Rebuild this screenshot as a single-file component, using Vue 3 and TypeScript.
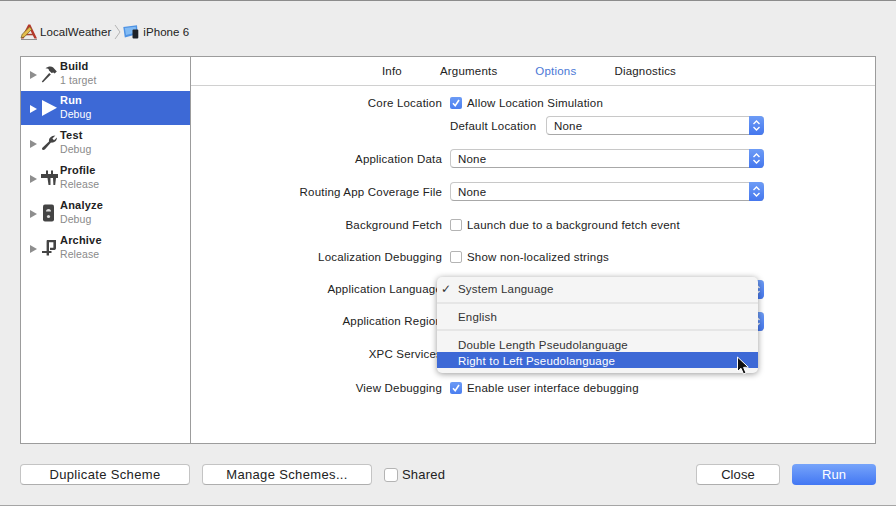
<template>
  <div class="sheet">
    <!-- breadcrumb -->
    <div class="crumbs">
      <svg class="app-icon" width="18" height="18" viewBox="0 0 18 18">
        <path d="M1 15.5 L8.3 1.5 L10.3 1.5 L17 15.5 L14.4 15.5 L9.2 5 L3.6 15.5 Z" fill="#b5382b" />
        <path d="M4.5 10.8 H13.5 V12.3 H4.5 Z" fill="#a8432f" />
        <path d="M1 15 L2.2 11.2 L9.5 4 L11.8 6.2 L4.5 13.8 Z" fill="#e3bd4c" stroke="#6e5a28" stroke-width="0.7" />
        <path d="M1 16.5 H17" stroke="#8f8f8f" stroke-width="1" />
      </svg>
      <span class="crumb-text">LocalWeather</span>
      <svg class="chevron" width="7" height="16" viewBox="0 0 7 16">
        <path d="M1 1 L6 8 L1 15" fill="none" stroke="#b5b5b5" stroke-width="1" />
      </svg>
      <svg class="device-icon" width="16" height="14" viewBox="0 0 16 14">
        <path d="M0.3 2 L14 0.3 L14.6 9 L1.8 12.5 Z" fill="#4f93e4" />
        <path d="M1.8 3 L12.8 1.8 L13.2 7.5 L3 10 Z" fill="#82bbf4" />
        <rect x="9.5" y="4.5" width="5.8" height="9" rx="1" fill="#1e2228" />
      </svg>
      <span class="crumb-text">iPhone 6</span>
    </div>

    <!-- main panel -->
    <div class="panel">
      <aside class="sidebar">
        <div
          v-for="item in actions"
          :key="item.name"
          class="action"
          :class="{ selected: item.name === 'Run', short: item.name === 'Build' || item.name === 'Run' }"
        >
          <span class="disclosure"></span>
          <span class="action-icon">
            <svg width="19" height="22" viewBox="0 0 19 22" v-html="item.icon"></svg>
          </span>
          <div class="action-text">
            <div class="action-name">{{ item.name }}</div>
            <div class="action-sub">{{ item.sub }}</div>
          </div>
        </div>
      </aside>

      <section class="content">
        <nav class="tabs">
          <span v-for="tab in tabs" :key="tab" class="tab" :class="{ active: tab === 'Options' }">{{ tab }}</span>
        </nav>

        <div class="form">
          <div class="group">
            <div class="row">
              <label class="label">Core Location</label>
              <span class="check on"><svg width="12" height="12" viewBox="0 0 12 12"><path d="M3 6.3 L5.2 8.8 L9 3" fill="none" stroke="#fff" stroke-width="1.6" /></svg></span>
              <span class="check-text">Allow Location Simulation</span>
            </div>
            <div class="row">
              <label class="label"></label>
              <span class="inline-label">Default Location</span>
              <div class="select short">
                <span class="select-value">None</span>
                <span class="stepper"><svg width="9" height="13" viewBox="0 0 9 13"><path d="M1.5 5 L4.5 2 L7.5 5 M1.5 8 L4.5 11 L7.5 8" fill="none" stroke="#fff" stroke-width="1.4" /></svg></span>
              </div>
            </div>
          </div>

          <div class="row">
            <label class="label">Application Data</label>
            <div class="select">
              <span class="select-value">None</span>
              <span class="stepper"><svg width="9" height="13" viewBox="0 0 9 13"><path d="M1.5 5 L4.5 2 L7.5 5 M1.5 8 L4.5 11 L7.5 8" fill="none" stroke="#fff" stroke-width="1.4" /></svg></span>
            </div>
          </div>
          <div class="row">
            <label class="label">Routing App Coverage File</label>
            <div class="select">
              <span class="select-value">None</span>
              <span class="stepper"><svg width="9" height="13" viewBox="0 0 9 13"><path d="M1.5 5 L4.5 2 L7.5 5 M1.5 8 L4.5 11 L7.5 8" fill="none" stroke="#fff" stroke-width="1.4" /></svg></span>
            </div>
          </div>
          <div class="row">
            <label class="label">Background Fetch</label>
            <span class="check"></span>
            <span class="check-text">Launch due to a background fetch event</span>
          </div>
          <div class="row tight">
            <label class="label">Localization Debugging</label>
            <span class="check"></span>
            <span class="check-text">Show non-localized strings</span>
          </div>
          <div class="row tight">
            <label class="label">Application Language</label>
            <div class="select">
              <span class="stepper"><svg width="9" height="13" viewBox="0 0 9 13"><path d="M1.5 5 L4.5 2 L7.5 5 M1.5 8 L4.5 11 L7.5 8" fill="none" stroke="#fff" stroke-width="1.4" /></svg></span>
            </div>
          </div>
          <div class="row tight">
            <label class="label">Application Region</label>
            <div class="select">
              <span class="stepper"><svg width="9" height="13" viewBox="0 0 9 13"><path d="M1.5 5 L4.5 2 L7.5 5 M1.5 8 L4.5 11 L7.5 8" fill="none" stroke="#fff" stroke-width="1.4" /></svg></span>
            </div>
          </div>
          <div class="row">
            <label class="label">XPC Services</label>
          </div>
          <div class="row last">
            <label class="label">View Debugging</label>
            <span class="check on"><svg width="12" height="12" viewBox="0 0 12 12"><path d="M3 6.3 L5.2 8.8 L9 3" fill="none" stroke="#fff" stroke-width="1.6" /></svg></span>
            <span class="check-text">Enable user interface debugging</span>
          </div>
        </div>

        <!-- language popup -->
        <div class="popup">
          <div class="popup-item first"><span class="tick">✓</span>System Language</div>
          <div class="popup-sep"></div>
          <div class="popup-item plain">English</div>
          <div class="popup-sep"></div>
          <div class="popup-item double">Double Length Pseudolanguage</div>
          <div class="popup-item hover">Right to Left Pseudolanguage</div>
        </div>
        <svg class="cursor" width="14" height="20" viewBox="0 0 14 20">
          <path d="M1.5 1 L1.5 15.5 L5 12.3 L7.5 18 L10 17 L7.6 11.4 L12.3 11.2 Z" fill="#111" stroke="#fff" stroke-width="1" />
        </svg>
      </section>
    </div>

    <!-- footer buttons -->
    <footer class="footer">
      <button class="btn wide">Duplicate Scheme</button>
      <button class="btn wide">Manage Schemes...</button>
      <span class="check shared-box"></span>
      <span class="shared-text">Shared</span>
      <span class="spacer"></span>
      <button class="btn narrow">Close</button>
      <button class="btn narrow primary">Run</button>
    </footer>
  </div>
</template>

<script setup lang="ts">
interface SchemeAction {
  name: string
  sub: string
  icon: string
}

const tabs: string[] = ['Info', 'Arguments', 'Options', 'Diagnostics']

const actions: SchemeAction[] = [
  {
    name: 'Build',
    sub: '1 target',
    icon: '<path d="M1.8 19.6 L0.8 18.4 L8.2 10 L9.8 11.5 Z" fill="#444"/><path d="M4.5 5.2 C7.5 3.2 10.5 3.2 12.2 4.6 L15.8 8.4 L13.6 10.6 L12.4 9.4 L10.6 10 L8 7.4 C8 6 6.8 5.3 4.5 5.2 Z" fill="#444"/>'
  },
  {
    name: 'Run',
    sub: 'Debug',
    icon: '<path d="M1 3 L16 10.8 L1 19 Z" fill="#fff"/>'
  },
  {
    name: 'Test',
    sub: 'Debug',
    icon: '<path d="M2.4 18 C1 18 .6 16.6 1.4 15.8 L8 9.6 C7.6 6.6 9.8 3.8 14.4 3.6 L11.4 6.4 L13 8.2 L16 5.6 C16 8.8 13.2 11 10 10.6 L4 17.2 C3.6 17.7 3 18 2.4 18 Z" fill="#444"/>'
  },
  {
    name: 'Profile',
    sub: 'Release',
    icon: '<path d="M0 7 H17 V11 H0 Z" fill="#444"/><path d="M5 3.5 H7 V7 H5 Z M10 3.5 H12 V7 H10 Z" fill="#444"/><path d="M6.5 11 H9.5 V18 H7.5 Z M12 11 H15 L14.2 18 H12.4 Z" fill="#444"/>'
  },
  {
    name: 'Analyze',
    sub: 'Debug',
    icon: '<rect x="2" y="2.5" width="11" height="17" rx="2" fill="#444"/><path d="M5 9.5 A2.5 2.5 0 0 1 10 9.5 Z" fill="#ddd"/><circle cx="7.5" cy="14.5" r="1.6" fill="#ddd"/>'
  },
  {
    name: 'Archive',
    sub: 'Release',
    icon: '<path d="M6 3 H15 V11 C15 12.5 14 13 13 13 H9 V10.8 H12.4 V5.2 H8 V14 H10.5 V16 H8 V18.5 H5.6 V16 H1 V14 H5.6 V5 C5.6 4 5.6 3.4 6 3 Z" fill="#444"/>'
  }
]
</script>

<style>
html,
body {
  margin: 0;
  background: #ededed;
}
</style>

<style scoped>
.sheet {
  width: 896px;
  height: 506px;
  box-sizing: border-box;
  overflow: hidden;
  background: #ededed;
  border-top: 1px solid #8c8c8c;
  border-bottom: 1px solid #a5a5a5;
  padding: 0 20px;
  font-family: "Liberation Sans", Arial, sans-serif;
  font-size: 11.5px;
  letter-spacing: 0.2px;
  color: #222;
}

.crumbs {
  height: 55px;
  padding-top: 7px;
  box-sizing: border-box;
  display: flex;
  align-items: center;
}

.crumb-text {
  letter-spacing: 0.05px;
}

.app-icon {
  margin-right: 2px;
}

.chevron {
  margin: 0 2px 0 3px;
}

.device-icon {
  margin-right: 4px;
}

.panel {
  display: flex;
  height: 388px;
  box-sizing: border-box;
  border: 1px solid #9c9c9c;
  background: #fff;
}

.sidebar {
  width: 169px;
  flex-shrink: 0;
  border-right: 1px solid #9c9c9c;
}

.action {
  height: 35px;
  display: flex;
  align-items: center;
  padding-left: 9px;
  box-sizing: border-box;
}

.action.short {
  height: 34px;
}

.action.selected {
  background: #3d69d6;
  color: #fff;
}

.disclosure {
  width: 0;
  height: 0;
  border-left: 7px solid #8e8e8e;
  border-top: 4.5px solid transparent;
  border-bottom: 4.5px solid transparent;
  margin-top: 2px;
}

.selected .disclosure {
  border-left-color: #fff;
}

.action-icon {
  width: 19px;
  height: 22px;
  margin-left: 4px;
}

.action-text {
  margin-top: -2px;
}

.action-name {
  font-weight: bold;
  font-size: 11px;
  line-height: 14px;
  color: #222;
}

.action-sub {
  font-size: 10.5px;
  line-height: 14px;
  color: #8a8a8a;
  letter-spacing: 0.1px;
}

.selected .action-name,
.selected .action-sub {
  color: #fff;
}

.content {
  flex: 1;
  position: relative;
}

.tabs {
  height: 29px;
  box-sizing: border-box;
  border-bottom: 1px solid #d0d0d0;
  display: flex;
  justify-content: center;
  align-items: center;
  gap: 38px;
  padding-right: 8px;
}

.tab.active {
  color: #4a78d6;
}

.form {
  padding-top: 5px;
  display: flex;
  flex-direction: column;
  gap: 10px;
}

.row {
  height: 23px;
  display: flex;
  align-items: center;
}

.row.tight {
  height: 22px;
}

.row.last {
  margin-top: 1px;
}

.label {
  width: 251px;
  text-align: right;
  margin-right: 8px;
  flex-shrink: 0;
  white-space: nowrap;
}

.check {
  width: 12px;
  height: 12px;
  border-radius: 2px;
  box-sizing: border-box;
  border: 1px solid #b4b4b4;
  background: #fff;
  margin-right: 5px;
  flex-shrink: 0;
  display: block;
}

.check.on {
  border: none;
  background: linear-gradient(#6c9bf5, #4a7ef0);
}

.inline-label {
  width: 96px;
}

.select {
  width: 314px;
  height: 19px;
  box-sizing: border-box;
  background: #fff;
  border: 1px solid #c8c8c8;
  border-bottom-color: #a8a8a8;
  border-radius: 4px;
  display: flex;
  align-items: center;
  position: relative;
  padding-left: 7px;
}

.select.short {
  width: 218px;
}

.stepper {
  position: absolute;
  right: -1px;
  top: -1px;
  bottom: -1px;
  width: 15px;
  border-radius: 0 4px 4px 0;
  background: linear-gradient(#6d9cf6, #4577ee);
  display: flex;
  align-items: center;
  justify-content: center;
}

.popup {
  position: absolute;
  left: 246px;
  top: 220px;
  width: 321px;
  height: 96px;
  box-sizing: border-box;
  background: #f5f5f5;
  border-radius: 5px;
  box-shadow: 0 1px 6px rgba(0, 0, 0, 0.4);
  padding-top: 3px;
  color: #333;
}

.popup-item {
  height: 16px;
  line-height: 18px;
  padding-left: 21px;
  position: relative;
}

.popup-item.first {
  height: 18px;
}

.popup-item.plain {
  line-height: 16px;
}

.tick {
  position: absolute;
  left: 4px;
  top: 0;
  font-size: 12px;
  font-family: "DejaVu Sans", sans-serif;
}

.popup-sep {
  height: 2px;
  background: #e6e6e6;
  margin: 4px 0 5px;
}

.popup-item.hover {
  background: #3d69d6;
  color: #fff;
}

.cursor {
  position: absolute;
  left: 545px;
  top: 299px;
}

.footer {
  display: flex;
  align-items: center;
  gap: 12px;
  margin-top: 20px;
  height: 21px;
}

.btn {
  height: 21px;
  box-sizing: border-box;
  border: 1px solid #c4c4c4;
  border-bottom-color: #aeaeae;
  border-radius: 4px;
  background: #fff;
  font-family: inherit;
  font-size: 13px;
  letter-spacing: 0.1px;
  color: #222;
  padding: 0;
}

.btn.wide {
  width: 170px;
  letter-spacing: 0.35px;
}

.btn.narrow {
  width: 84px;
}

.btn.primary {
  border: none;
  background: linear-gradient(#77a4fa, #4277f3);
  color: #fff;
}

.shared-box {
  width: 14px;
  height: 14px;
  margin-right: 0;
  border-radius: 3px;
}

.shared-text {
  font-size: 13px;
  margin-left: -8px;
}

.spacer {
  flex: 1;
}
</style>
